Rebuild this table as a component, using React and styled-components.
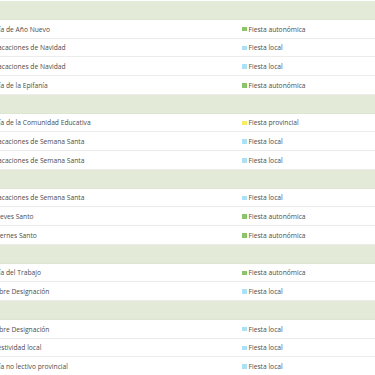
import styled, { createGlobalStyle } from "styled-components";

const GlobalStyle = createGlobalStyle`
    html, body {
        margin: 0;
        padding: 0;
        background: #ffffff;
    }
    body {
        font-family: "Open Sans", "Liberation Sans", sans-serif;
        overflow: hidden;
    }
`;

const Page = styled.div`
    width: 375px;
    height: 375px;
    overflow: hidden;
    padding-top: 1px;
    box-sizing: border-box;
`;

const Table = styled.div`
    display: flex;
    flex-direction: column;
    margin-left: -6px;
`;

const MonthBand = styled.div`
    height: 18.75px;
    background-color: #e3ebd8;
    border-bottom: 1px solid #dde6d2;
    box-sizing: border-box;
`;

const Row = styled.div`
    display: grid;
    grid-template-columns: 248px 1fr;
    align-items: center;
    height: 18.75px;
    padding-top: 1px;
    border-bottom: 1px solid #ececec;
    box-sizing: border-box;
    font-size: 6.7px;
    color: #4d4d4d;
`;

const Name = styled.div`
    white-space: nowrap;
    overflow: hidden;
`;

const Type = styled.div`
    display: flex;
    align-items: center;
    gap: 2px;
    white-space: nowrap;
`;

const Swatch = styled.span`
    display: inline-block;
    width: 4.5px;
    height: 4.5px;
    background-color: ${(p) => p.$color};
`;

const KINDS = {
    auto: { label: "Fiesta autonómica", color: "#8cc46c" },
    local: { label: "Fiesta local", color: "#ace0f7" },
    prov: { label: "Fiesta provincial", color: "#f4ef62" },
};

const groups = [
    [
        ["Día de Año Nuevo", "auto"],
        ["Vacaciones de Navidad", "local"],
        ["Vacaciones de Navidad", "local"],
        ["Día de la Epifanía", "auto"],
    ],
    [
        ["Día de la Comunidad Educativa", "prov"],
        ["Vacaciones de Semana Santa", "local"],
        ["Vacaciones de Semana Santa", "local"],
    ],
    [
        ["Vacaciones de Semana Santa", "local"],
        ["Jueves Santo", "auto"],
        ["Viernes Santo", "auto"],
    ],
    [
        ["Día del Trabajo", "auto"],
        ["Libre Designación", "local"],
    ],
    [
        ["Libre Designación", "local"],
        ["Festividad local", "local"],
        ["Día no lectivo provincial", "local"],
    ],
];

function App() {
    return (
        <Page>
            <GlobalStyle />
            <Table>
                {groups.map((rows, gi) => (
                    <div key={gi}>
                        <MonthBand />
                        {rows.map(([name, kind], ri) => (
                            <Row key={ri}>
                                <Name>{name}</Name>
                                <Type>
                                    <Swatch $color={KINDS[kind].color} />
                                    {KINDS[kind].label}
                                </Type>
                            </Row>
                        ))}
                    </div>
                ))}
            </Table>
        </Page>
    );
}

export default App;
